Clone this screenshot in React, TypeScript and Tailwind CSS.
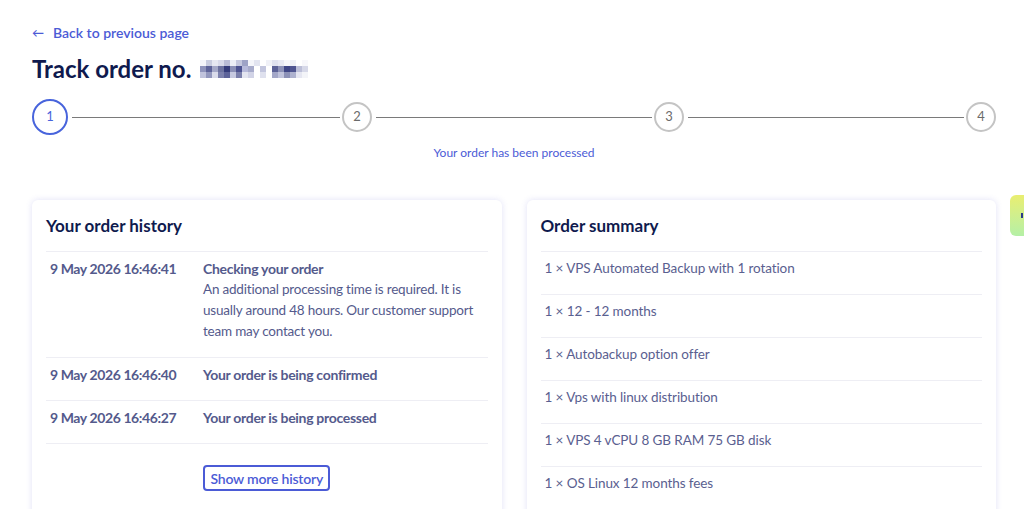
import React from "react";

const font = { fontFamily: "Lato, 'Noto Sans', sans-serif" };

// blurred order number, drawn as pixel blocks
const blur: string[][] = [
  ["#f4f5fa", "#c9cde0", "#e6e8f2", "#d8daea", "#b9bcd6", "#eceef6", "#c5c8de", "#9ea3c6", "#f4f5fa", "#e2e4f0", "#ffffff", "#f0f1f7", "#dfe1ee", "#e8e9f3", "#f6f6fa", "#eef0f6", "#ffffff", "#f7f7fb"],
  ["#8e93bb", "#5d6399", "#a4a8c8", "#6c729f", "#343b7a", "#8a8fb6", "#4c5290", "#b7badb", "#a7abcb", "#ffffff", "#c3c6de", "#ffffff", "#5b6196", "#8c91b7", "#3f4686", "#4f5590", "#bcbfd8", "#d6d8e8"],
  ["#c0c3dc", "#9297bd", "#d9dbea", "#7c81ad", "#5d6399", "#c6c9e0", "#7a7fab", "#e3e5f0", "#d1d3e6", "#ffffff", "#dfe1ee", "#ffffff", "#a3a7c8", "#c0c3dc", "#8c91b7", "#aeb2cf", "#e5e6f1", "#f3f4f8"],
];

const Step = ({ n }: { n: string }) => (
  <div className="flex h-[30px] w-[30px] shrink-0 items-center justify-center rounded-full border-2 border-[#c4c4c4] text-[13px] text-[#6b6b6b]">
    {n}
  </div>
);

const Stepper = () => (
  <div className="mt-[14px] flex items-center">
    <div className="flex h-9 w-9 shrink-0 items-center justify-center rounded-full border-2 border-[#4864dc] text-[13px] text-[#4864dc]">1</div>
    <div className="ml-1 mr-[2px] h-px flex-[268] bg-[#7a7a7a]" />
    <Step n="2" />
    <div className="ml-1 mr-[2px] h-px flex-[276] bg-[#7a7a7a]" />
    <Step n="3" />
    <div className="ml-1 mr-[2px] h-px flex-[276] bg-[#7a7a7a]" />
    <Step n="4" />
  </div>
);

const history = [
  {
    date: "9 May 2026 16:46:41",
    title: "Checking your order",
    desc: "An additional processing time is required. It is usually around 48 hours. Our customer support team may contact you.",
  },
  { date: "9 May 2026 16:46:40", title: "Your order is being confirmed" },
  { date: "9 May 2026 16:46:27", title: "Your order is being processed" },
];

const items = [
  "VPS Automated Backup with 1 rotation",
  "12 - 12 months",
  "Autobackup option offer",
  "Vps with linux distribution",
  "VPS 4 vCPU 8 GB RAM 75 GB disk",
  "OS Linux 12 months fees",
];

const Card = ({ title, children }: { title: string; children: React.ReactNode }) => (
  <div className="rounded-md bg-white px-[14px] pt-[14px] pb-[15px] shadow-[0_0_6px_rgba(90,90,210,0.18)]">
    <h2 className="pb-[13px] text-[17px] font-bold leading-6 text-[#0f1a4e]">{title}</h2>
    {children}
  </div>
);

export default function App() {
  return (
    <div className="relative h-[509px] overflow-hidden bg-white pl-8 pr-7 pt-[23px]" style={font}>
      <a className="flex items-center gap-[9px] text-[14px] font-semibold leading-5 text-[#4b5bd6]" href="#">
        <span className="text-[12px]">←</span>
        <span>Back to previous page</span>
      </a>

      <div className="mt-[10px] flex items-center">
        <h1 className="text-[24px] font-bold leading-8 text-[#0f1a4e]">Track order no.</h1>
        <div className="ml-[9px] flex flex-col">
          {blur.map((row, i) => (
            <div key={i} className="flex">
              {row.map((c, j) => (
                <div key={j} className="h-[6px] w-[6px]" style={{ backgroundColor: c }} />
              ))}
            </div>
          ))}
        </div>
      </div>

      <Stepper />

      <p className="mt-[10px] text-center text-[12px] leading-4 text-[#4b5bd6]">Your order has been processed</p>

      <div className="mt-[39px] grid grid-cols-2 gap-[25px]">
        <Card title="Your order history">
          <div className="border-t border-[#eeeef4]">
            {history.map((h) => (
              <div key={h.date} className="flex border-b border-[#eeeef4] pl-1 pt-[6px] pb-[15px] text-[13.5px] leading-[21px] text-[#545a8c]">
                <div className="w-[153px] shrink-0 text-[14px] font-bold tracking-[-0.4px]">{h.date}</div>
                <div className="flex-1">
                  <div className="text-[14px] font-bold tracking-[-0.3px]">{h.title}</div>
                  {h.desc && <div className="tracking-[-0.2px]">{h.desc}</div>}
                </div>
              </div>
            ))}
          </div>
          <div className="mt-[21px] flex justify-center">
            <button className="h-[26px] rounded-[4px] border-2 border-[#4b5bd6] px-[5px] text-[14px] font-semibold tracking-[-0.2px] text-[#4b5bd6]">
              Show more history
            </button>
          </div>
        </Card>

        <Card title="Order summary">
          <div className="border-t border-[#eeeef4]">
            {items.map((it) => (
              <div key={it} className="border-b border-[#eeeef4] px-1 pt-[6px] pb-[15px] text-[13.5px] leading-[21px] tracking-[-0.1px] text-[#5a6090]">
                1 × {it}
              </div>
            ))}
          </div>
        </Card>
      </div>

      <div className="absolute right-0 top-[195px] flex h-[41px] w-[14px] items-center justify-end rounded-l-md bg-gradient-to-b from-[#e9ee70] to-[#b4f0a6]">
        <span className="mr-[1px] h-[5px] w-[2px] bg-[#2a3a8a]" />
      </div>
    </div>
  );
}
